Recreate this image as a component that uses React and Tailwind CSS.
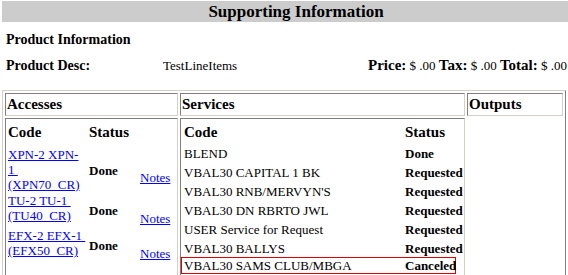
const accesses = [
  { lines: ["XPN-2 XPN-", "1\u00a0", "(XPN70_CR)"], h: "h-[46px]" },
  { lines: ["TU-2 TU-1\u00a0", "(TU40_CR)"], h: "h-[35px]" },
  { lines: ["EFX-2 EFX-1\u00a0", "(EFX50_CR)"], h: "h-[35px]" },
];

const services = [
  { code: "BLEND", status: "Done", h: "h-[19px]" },
  { code: "VBAL30 CAPITAL 1 BK", status: "Requested", h: "h-[19px]" },
  { code: "VBAL30 RNB/MERVYN'S", status: "Requested", h: "h-[19px]" },
  { code: "VBAL30 DN RBRTO JWL", status: "Requested", h: "h-[19px]" },
  { code: "USER Service for Request", status: "Requested", h: "h-[19px]" },
  { code: "VBAL30 BALLYS", status: "Requested", h: "h-[18px]" },
];

const inset =
  "border border-t-[#808080] border-l-[#808080] border-r-[#d4d0c8] border-b-[#d4d0c8]";

function HeaderCell({ children }) {
  return (
    <div
      className={`${inset} h-[23px] flex items-center pl-[1px] text-[15px] leading-[17px] font-bold`}
    >
      {children}
    </div>
  );
}

export default function App() {
  return (
    <div className="w-[568px] h-[275px] overflow-hidden bg-white text-black font-['Liberation_Serif',serif]">
      <div className="ml-[2px] mt-[1px] w-[588px] h-[21px] bg-[#cccccc] flex items-center justify-center text-[17px] font-bold">
        Supporting Information
      </div>

      <div className="pl-[6px] mt-[10px] text-[14px] leading-[16px] font-bold">
        Product Information
      </div>
      <div className="mt-[9px] w-[568px] flex items-baseline leading-[16px] whitespace-nowrap">
        <div className="w-[163px] pl-[6px] text-[14px] font-bold">Product Desc:</div>
        <div className="text-[13px]">TestLineItems</div>
        <div className="ml-auto pr-[1px]">
          <b className="text-[15px]">Price:</b>
          <span className="text-[13px]"> $ .00 </span>
          <b className="text-[15px]">Tax:</b>
          <span className="text-[13px]"> $ .00 </span>
          <b className="text-[15px]">Total:</b>
          <span className="text-[13px]"> $ .00</span>
        </div>
      </div>

      <div className="mt-[16px] ml-[2px] w-[564px] h-[200px] border border-t-[#d4d0c8] border-l-[#d4d0c8] border-r-[#808080] border-b-[#808080] p-[2px] grid grid-cols-[173px_285px_96px] grid-rows-[23px_1fr] gap-[2px]">
        <HeaderCell>Accesses</HeaderCell>
        <HeaderCell>Services</HeaderCell>
        <HeaderCell>Outputs</HeaderCell>

        {/* accesses */}
        <div className={`${inset} pl-[2px] pt-[5px]`}>
          <div className="grid grid-cols-[81px_51px_1fr] text-[15px] leading-[17px] font-bold">
            <div>Code</div>
            <div>Status</div>
            <div />
          </div>
          <div className="mt-[6px]">
            {accesses.map((a, i) => (
              <div key={i} className={`grid grid-cols-[81px_51px_1fr] ${a.h}`}>
                <div className="text-[13px] leading-[15px]">
                  {a.lines.map((l, j) => (
                    <div key={j}>
                      <a href="#" className="text-[#0000ff] underline">
                        {l}
                      </a>
                    </div>
                  ))}
                </div>
                <div className="flex items-center text-[13px] leading-[15px] font-bold">
                  Done
                </div>
                <div className="flex items-center text-[13px] leading-[15px]">
                  <a href="#" className="pt-[15px] text-[#0000ff] underline">
                    Notes
                  </a>
                </div>
              </div>
            ))}
          </div>
        </div>

        {/* services */}
        <div className={`${inset} pt-[5px]`}>
          <div className="grid grid-cols-[221px_1fr] pl-[3px] text-[15px] leading-[17px] font-bold">
            <div>Code</div>
            <div>Status</div>
          </div>
          <div className="mt-[3px] text-[13px] leading-[15px]">
            {services.map((s) => (
              <div key={s.code} className={`grid grid-cols-[221px_1fr] items-center pl-[3px] ${s.h}`}>
                <div>{s.code}</div>
                <div className="font-bold">{s.status}</div>
              </div>
            ))}
            <div className="w-[275px] h-[17px] border border-[#e00000] grid grid-cols-[221px_1fr] items-center pl-[2px]">
              <div>VBAL30 SAMS CLUB/MBGA</div>
              <div className="font-bold">Canceled</div>
            </div>
          </div>
        </div>

        {/* outputs */}
        <div />
      </div>
    </div>
  );
}
